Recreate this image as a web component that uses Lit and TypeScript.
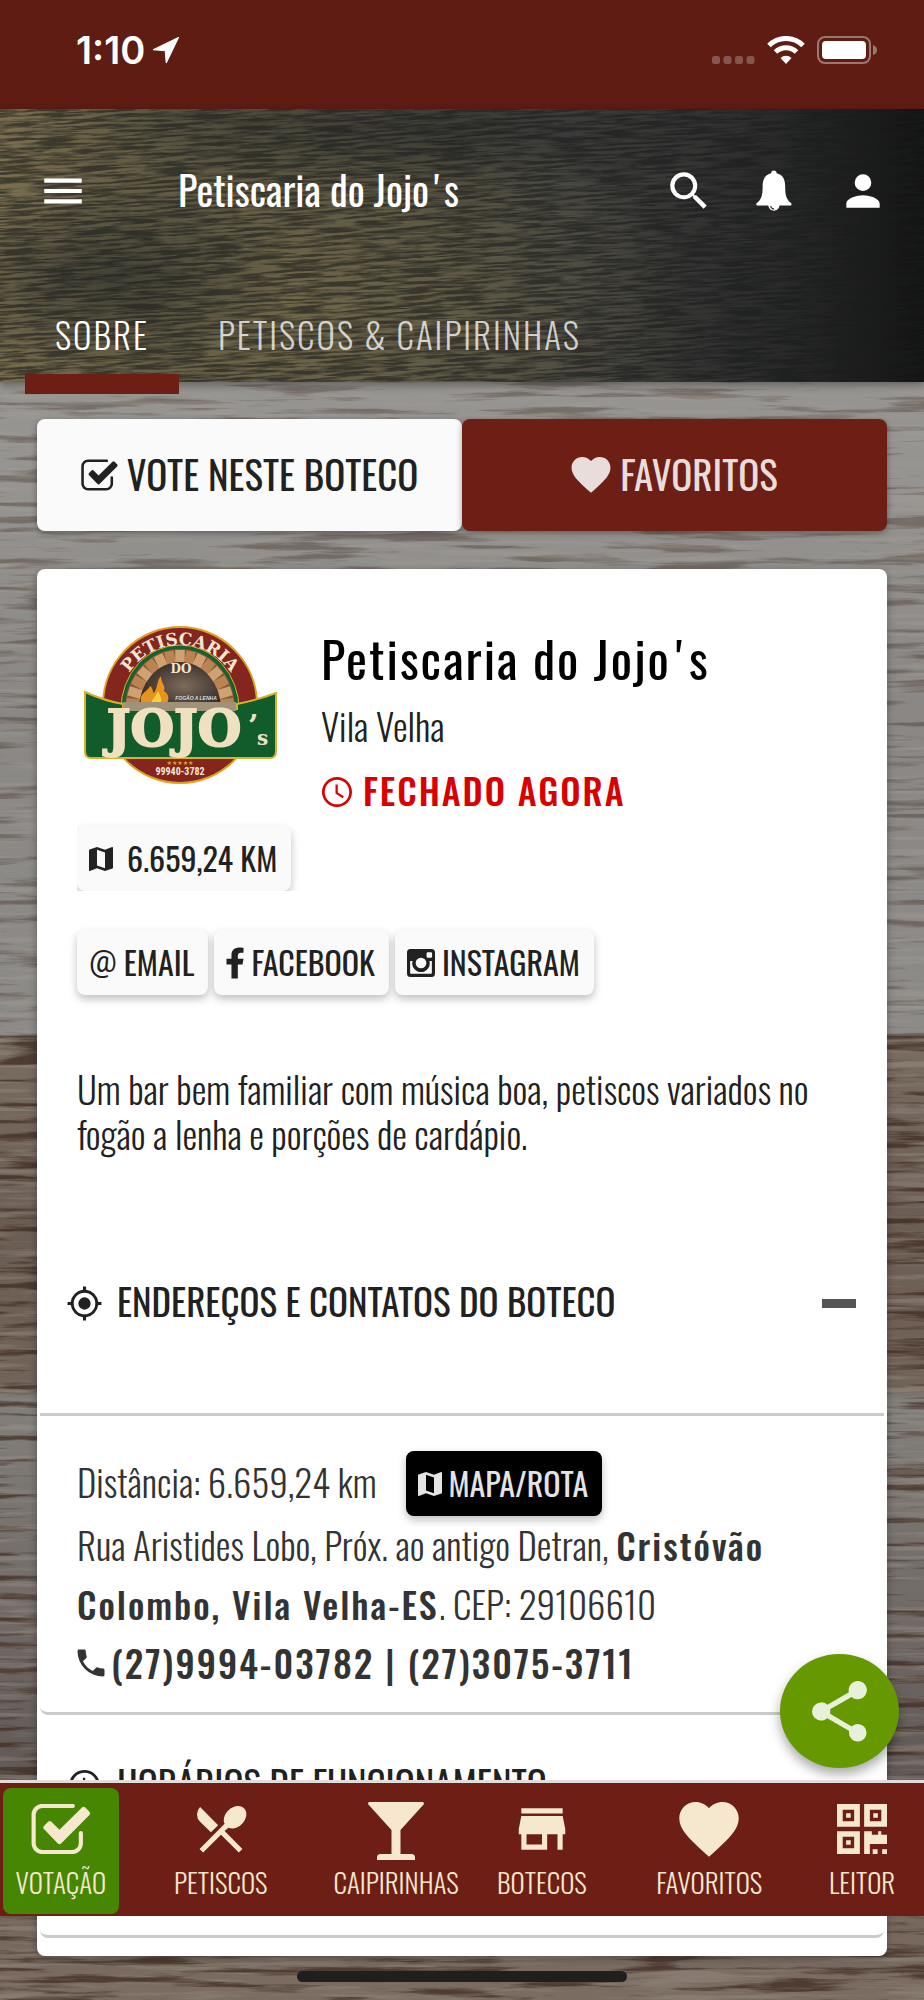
import { LitElement, html, svg, css } from "lit";
import { customElement, state } from "lit/decorators.js";
import { classMap } from "lit/directives/class-map.js";

const icon = (body: unknown, cls = "", box = "0 0 24 24") =>
  html`<svg class="icon ${cls}" viewBox=${box} aria-hidden="true">${body}</svg>`;

const HEART = svg`<path d="M12 21.4l-1.5-1.3C5.4 15.4 2 12.3 2 8.5 2 5.4 4.4 3 7.5 3c1.7 0 3.4.8 4.5 2.1C13.1 3.8 14.8 3 16.5 3 19.6 3 22 5.400 22 8.500c0 3.800-3.400 6.900-8.500 11.600z"/>`;
const CHECK = svg`<path d="M16.500 3.700H5.600A3.200 3.200 0 0 0 2.400 6.900v10.200a3.200 3.200 0 0 0 3.200 3.200h10.600a3.200 3.200 0 0 0 3.200-3.200v-3.600" fill="none" stroke="currentColor" stroke-width="1.500" stroke-linecap="round"/><path d="M6.200 10.800l1.400-1.400a.9.9 0 0 1 1.200 0l2.900 2.900 8.100-8a.9.9 0 0 1 1.200 0l1.500 1.500a.9.9 0 0 1 0 1.200L12.300 17.200a.9.9 0 0 1-1.200 0L6.200 12.100a.9.9 0 0 1 0-1.300z"/>`;
const MAP = svg`<path d="M20.500 3l-.2 0L15 5.100 9 3 3.400 4.900c-.2.1-.4.3-.4.500V20.500c0 .3.200.5.500.5l.2 0L9 18.900l6 2.100 5.600-1.900c.2-.1.4-.3.4-.5V3.500c0-.3-.2-.5-.5-.5zM15 19l-6-2.100V5l6 2.100V19z"/>`;
const CLOCK = svg`<path d="M12 2C6.500 2 2 6.500 2 12s4.500 10 10 10 10-4.500 10-10S17.500 2 12 2zm0 18.200a8.200 8.200 0 1 1 0-16.400 8.200 8.200 0 0 1 0 16.400zM12.500 7H11v6l4.800 3.200.8-1.300-4.100-2.600z"/>`;
const GPS = svg`<path d="M12 8a4 4 0 1 0 0 8 4 4 0 0 0 0-8zm8.900 3A9 9 0 0 0 13 3.100V1h-2v2.100A9 9 0 0 0 3.100 11H1v2h2.100A9 9 0 0 0 11 20.900V23h2v-2.100A9 9 0 0 0 20.900 13H23v-2zM12 19a7 7 0 1 1 0-14 7 7 0 0 1 0 14z"/>`;

const NAV = [
  { label: "VOTAÇÃO", cls: "n1", ic: () => icon(CHECK, "nav-check", "1.500 3 21.500 18") },
  { label: "PETISCOS", cls: "n2", ic: () => icon(svg`<path d="M8.100 13.300l2.800-2.800L3.900 3.500a4 4 0 0 0 0 5.700zm6.800-1.800c1.500.7 3.700.2 5.200-1.400 1.900-1.900 2.300-4.700.8-6.100-1.500-1.500-4.200-1.100-6.100.8-1.600 1.600-2.100 3.700-1.400 5.200L3.700 19.700l1.400 1.400L12 14.200l6.900 6.900 1.400-1.400-6.900-6.900z"/>`) },
  { label: "CAIPIRINHAS", cls: "n3", ic: () => icon(svg`<path d="M1.500 0h53a1.500 1.500 0 0 1 1.100 2.500L32.500 28v24h11a3.500 3.500 0 0 1 3.500 3.500V58H9v-2.500A3.500 3.500 0 0 1 12.500 52h11V28L.4 2.500A1.500 1.500 0 0 1 1.500 0z"/>`, "martini", "0 0 56 58") },
  { label: "BOTECOS", cls: "n4", ic: () => icon(svg`<path d="M20 4H4v2h16zm1 10v-2l-1-5H4l-1 5v2h1v6h10v-6h4v6h2v-6zm-9 4H6v-4h6z"/>`) },
  { label: "FAVORITOS", cls: "n5", ic: () => icon(HEART, "nav-heart", "2 3 20 18.500") },
  { label: "LEITOR", cls: "n6", ic: () => icon(svg`<path fill-rule="evenodd" d="M0 0h8v8H0zM2 2v4h4V2zM3.200 3.200h1.600v1.600H3.200zM9.500 0h8v8h-8zM11.500 2v4h4V2zM12.700 3.200h1.600v1.600h-1.600zM0 9.500h8v8H0zM2 11.500v4h4v-4zM3.200 12.700h1.600v1.600H3.200zM9.500 9.500h2.700v1.300h2.200V9.500h1.100v1.300h2V14h-6v3.500h-2zM12.500 15.800h1.700v1.700h-1.700zM15.800 15.800h1.700v1.700h-1.700z"/>`, "qr", "0 0 17.500 17.500") },
];

@customElement("app-root")
export class AppRoot extends LitElement {
  @state() private tab = 0;

  static styles = css`
    :host {
      display: block;
      font-family: Oswald, "Roboto Condensed", sans-serif;
      font-weight: 400;
      color: #212121;
    }
    * { box-sizing: border-box; }
    button, a {
      font: inherit; color: inherit; text-decoration: none;
      border: 0; padding: 0; margin: 0; background: none; cursor: pointer;
    }
    h1, h2, h3, p { margin: 0; font-weight: inherit; }
    .icon { display: block; fill: currentColor; flex: none; width: 36px; height: 36px; }

    .page {
      min-height: 100vh;
      padding-bottom: 44px;
      background-image:
        url('data:image/svg+xml,<svg xmlns="http://www.w3.org/2000/svg" width="924" height="2000"><filter id="a" x="0" y="0" width="1" height="1" color-interpolation-filters="sRGB"><feTurbulence type="fractalNoise" baseFrequency="0.008 0.12" numOctaves="5" seed="7"/><feColorMatrix values="0 0 0 0 0.24  0 0 0 0 0.16  0 0 0 0 0.12  0 6 0 0 -3.100"/></filter><filter id="b" x="0" y="0" width="1" height="1" color-interpolation-filters="sRGB"><feTurbulence type="fractalNoise" baseFrequency="0.008 0.16" numOctaves="4" seed="3"/><feColorMatrix values="0 0 0 0 0.66  0 0 0 0 0.63  0 0 0 0 0.6  0 5 0 0 -2.500"/></filter><rect width="924" height="1036" filter="url(%23a)" opacity="0.35"/><rect y="1036" width="924" height="964" filter="url(%23a)" opacity="0.7"/><rect width="924" height="2000" filter="url(%23b)" opacity="0.3"/></svg>'),
        linear-gradient(180deg, #969491 0, #969491 480px, #8a8784 700px, #8d8b88 1034px, #7a6e63 1036px, #6a5d53 1220px, #716358 1386px, #827f7b 1400px, #7a7570 1500px, #6e6662 1650px, #605854 1780px, #75675c 1916px, #7b6d62 2000px);
      background-size: 924px 2000px, 100% 100%;
    }

    .status {
      height: 109px; background: #5e1c13; color: #fff;
      display: flex; align-items: center; justify-content: space-between;
      padding: 0 47px 10px 76px;
    }
    .time { display: flex; align-items: center; gap: 8px; font: 600 38px/44px Inter, sans-serif; }
    .time .icon { width: 26px; height: 26px; }
    .signals { display: flex; align-items: center; gap: 12px; }
    .dots { width: 43px; height: 28px; }
    .wifi { width: 38px; height: 28px; }
    .battery { width: 60px; height: 28px; }

    .header {
      color: #fff;
      background-image:
        url('data:image/svg+xml,<svg xmlns="http://www.w3.org/2000/svg" width="924" height="273"><filter id="a" x="0" y="0" width="1" height="1" color-interpolation-filters="sRGB"><feTurbulence type="fractalNoise" baseFrequency="0.025 0.42" numOctaves="4" seed="11"/><feColorMatrix values="0 0 0 0 0.1  0 0 0 0 0.11  0 0 0 0 0.11  0 4 0 0 -1.500"/></filter><rect x="-30" y="-30" width="990" height="340" filter="url(%23a)" opacity="0.6" transform="rotate(-3 460 130)"/></svg>'),
        radial-gradient(180px 90px at 12% 62%, rgba(40, 42, 42, 0.6), transparent),
        radial-gradient(320px 60px at 46% 8%, rgba(40, 42, 42, 0.55), transparent),
        radial-gradient(420px 240px at 30% 75%, #71684a, transparent),
        linear-gradient(90deg, #7d7050 0, #57523f 18%, #4d4a3e 45%, #42423e 62%, #2a2a2a 84%, #131313 100%);
      background-size: 924px 273px, 100% 100%, 100% 100%, 100% 100%, 100% 100%;
      box-shadow: 0 3px 8px rgba(0, 0, 0, 0.35);
    }
    .toolbar { height: 164px; display: flex; align-items: center; padding: 0 36px 0 38px; }
    .toolbar .icon { width: 50px; height: 50px; }
    .title { flex: 1; margin-left: 90px; font-size: 40px; line-height: 60px; padding-bottom: 4px; }
    .actions { display: flex; gap: 37px; }
    .apos { margin: 0 5px; }
    .tabs { display: flex; gap: 9px; height: 109px; padding-left: 25px; }
    .tab {
      position: relative; padding: 12px 30px 0;
      font-size: 35px; line-height: 52px; font-weight: 300; letter-spacing: 2px;
      color: rgba(255, 255, 255, 0.75);
    }
    .tab.on { color: #fff; }
    .tab.on::after {
      content: ""; position: absolute; left: 0; right: 0; bottom: -12px; height: 20px; background: #6e1f15;
    }

    main { padding: 37px 37px 0; }
    .cta { display: grid; grid-template-columns: 1fr 1fr; margin-bottom: 38px; }
    .cta button {
      display: flex; align-items: center; justify-content: center; gap: 9px;
      height: 112px; border-radius: 8px; font-size: 39px; line-height: 60px; padding-bottom: 4px;
      background: #fafafa; box-shadow: 0 2px 6px rgba(0, 0, 0, 0.35);
    }
    .cta .icon { width: 37px; height: 32px; margin-top: 4px; }
    .cta button.fav { background: #6e1f15; color: #e8dddb; }
    .cta .fav .icon { width: 40px; height: 36px; }

    .card { background: #fff; border-radius: 8px; box-shadow: 0 2px 8px rgba(0, 0, 0, 0.3); padding: 56px 0 18px; }
    .intro { padding: 0 40px; }
    .place { display: grid; grid-template-columns: 244px 1fr; }
    .logo { width: 208px; height: 160px; display: block; }
    .name { font-size: 50px; line-height: 64px; color: #000; letter-spacing: 2px; }
    .city { font-size: 37px; line-height: 74px; font-weight: 300; }
    .closed { display: flex; align-items: center; gap: 8px; font-size: 36px; line-height: 54px; font-weight: 500; letter-spacing: 2px; color: #d90000; }
    .closed .icon { width: 36px; height: 36px; margin: 4px 0 0 -2px; }

    .clip { overflow: hidden; height: 74px; width: 232px; padding-top: 9px; }
    .chip {
      display: inline-flex; align-items: center; gap: 7px; height: 65px; padding: 0 14px 2px 12px;
      border-radius: 8px; background: #fafafa; font-size: 32px; line-height: 48px; font-weight: 400;
      box-shadow: 0 4px 8px rgba(0, 0, 0, 0.25);
    }
    .chip .icon { width: 28px; height: 28px; margin-top: 2px; }
    .chip .map { width: 24px; height: 24px; }
    .chip .fb { width: 18px; height: 34px; }
    .chip.km { gap: 14px; }
    .chip.dark { background: #000; color: #e4e4e4; }
    .at { font: 400 31px/40px Roboto, sans-serif; }
    .links { display: flex; flex-wrap: wrap; gap: 6px; margin-top: 39px; }
    .about { margin-top: 71px; font-size: 37px; line-height: 45px; font-weight: 300; }

    .panel { margin: 0 3px; border-bottom: 3px solid #cbcbcb; border-radius: 8px; }
    .panel.first { margin-top: 95px; }
    .panel + .panel { margin-top: 18px; }
    .panel-head {
      display: flex; align-items: center; gap: 14px; width: 100%; text-align: left;
      padding: 22px 28px 84px 26px; font-size: 37px; line-height: 56px;
    }
    .panel-head .icon { width: 37px; height: 37px; margin-top: 4px; }
    .panel-head .label { flex: 1; }
    .minus { width: 34px; height: 9px; background: #555; margin-top: 4px; }
    .panel-body {
      border-top: 3px solid #cbcbcb; padding: 36px 37px 20px;
      font-size: 37px; line-height: 59px; font-weight: 300; color: #333;
    }
    .panel-body strong { font-size: 36px; font-weight: 500; letter-spacing: 2px; }
    .dist { display: flex; align-items: center; gap: 29px; height: 63px; }
    .dist span { padding-bottom: 4px; }
    .phones { display: flex; align-items: center; gap: 2px; font-weight: 500; letter-spacing: 2px; }
    .phones .icon { width: 36px; height: 36px; margin-left: -4px; }
    .panel.last .panel-head { padding-bottom: 124px; }

    .fab {
      position: fixed; right: 25px; bottom: 232px; width: 119px; height: 114px; border-radius: 50%;
      display: grid; place-items: center; background: #669900; color: #e8f0d9;
      box-shadow: 0 6px 12px rgba(0, 0, 0, 0.35);
    }
    .fab .icon { width: 73px; height: 73px; }

    .nav {
      position: fixed; left: 0; right: 0; bottom: 84px; height: 136px;
      display: flex; background: #6e1f15; border-top: 3px solid #e4dcdb; color: #f6e8cf; padding: 5px 4px 2px 3px;
    }
    .nav button {
      display: flex; flex-direction: column; align-items: center; flex: 140 1 0; min-width: 0;
      font-size: 27px; line-height: 42px; font-weight: 300; border-radius: 8px; padding-top: 9px;
    }
    .nav .pic { height: 64px; display: grid; place-items: center; }
    .nav .icon { width: 62px; height: 62px; }
    .nav .nav-check { width: 60px; height: 50px; }
    .nav .martini { width: 56px; height: 58px; margin-top: 4px; }
    .nav .nav-heart { width: 62px; height: 55px; }
    .nav .qr { width: 50px; height: 50px; }
    .nav .n1 { flex-grow: 116; background: #468600; }
    .nav .n2 { flex-grow: 204; }
    .nav .n3 { flex-grow: 147; }
    .nav .n4 { flex-grow: 145; }
    .nav .n5 { flex-grow: 190; }
    .nav .n6 { flex-grow: 116; }

    .home {
      position: fixed; bottom: 18px; left: 50%; margin-left: -165px; width: 330px; height: 11px;
      border-radius: 6px; background: #1f1f1f;
    }
  `;

  private logo() {
    const bricks = Array.from({ length: 15 }, (_, i) => {
      const a = Math.PI * (1 - (i + 0.5) / 15);
      const c = Math.cos(a), s = Math.sin(a);
      return svg`<line x1=${103 + 40 * c} y1=${84 - 46 * s} x2=${103 + 54 * c} y2=${84 - 59 * s} stroke=${i % 2 ? "#cfa173" : "#b98352"} stroke-width="9.500"/>`;
    });
    return html`<svg class="logo" viewBox="0 0 208 160" role="img" aria-label="Petiscaria do Jojo's">
      <defs>
        <path id="arc" d="M42 74 A62 66 0 0 1 164 74"/>
        <radialGradient id="oven" cx="0.55" cy="0.5" r="0.6"><stop offset="0" stop-color="#7d6c5c"/><stop offset="1" stop-color="#2f2521"/></radialGradient>
      </defs>
      <ellipse cx="103" cy="80" rx="77" ry="78" fill="#84261e" stroke="#e0a020" stroke-width="2"/>
      <path d="M44 84A59 64 0 0 1 162 84z" fill="#17602f" stroke="#d8b030" stroke-width="1"/>
      <path d="M48 84A55 60 0 0 1 158 84z" fill="#8a5a35"/>
      ${bricks}
      <path d="M62 84A41 47 0 0 1 144 84z" fill="url(#oven)"/>
      <path d="M65 80c-5-12 6-13 8-19 4 3 2 6 4 7 4-6 3-13 7-17 0 8 5 9 3 15 6 4 5 9 2 14z" fill="#e8941a"/>
      <path d="M75 80c-1-7 4-8 6-14 2 5 5 8 2 14z" fill="#f8cf3c"/>
      <path d="M8 67q20 9 38 12v5h114v-5q20-4 39-11v58q0 7-6 7H14q-6 0-6-7z" fill="#125c2b" stroke="#d8b030" stroke-width="2"/>
      <path d="M46 77h113v9H46z" fill="#a0927a"/>
      <text font-family="DejaVu Serif, serif" font-weight="700" font-size="17" fill="#f3e6d2" text-anchor="middle"><textPath href="#arc" startOffset="50%">PETISCARIA</textPath></text>
      <text x="104" y="48" font-family="DejaVu Serif, serif" font-weight="700" font-size="12" fill="#f3e6d2" text-anchor="middle">DO</text>
      <text x="119" y="75" font-family="Liberation Sans, sans-serif" font-weight="700" font-style="italic" font-size="5" fill="#ddd" text-anchor="middle">FOGÃO A LENHA</text>
      <text x="97" y="121" font-family="DejaVu Serif, serif" font-weight="700" font-size="50" fill="#efe0c0" stroke="#efe0c0" stroke-width="2" text-anchor="middle">JOJO</text>
      <text x="171" y="111" font-family="DejaVu Serif, serif" font-weight="700" font-size="30" fill="#efe0c0">’</text>
      <text x="180" y="120" font-family="DejaVu Serif, serif" font-weight="700" font-size="20" fill="#efe0c0">s</text>
      <text x="103" y="140" font-family="DejaVu Sans, sans-serif" font-size="6" fill="#e8a020" text-anchor="middle">★★★★★</text>
      <text x="103" y="150" font-family="Roboto Condensed, sans-serif" font-weight="700" font-size="10" fill="#f3e6d2" text-anchor="middle">99940-3782</text>
    </svg>`;
  }

  render() {
    return html`
      <div class="page">
        <div class="status">
          <div class="time"><span>1:10</span>${icon(svg`<path d="M23.500.5 0 11.800l11.300.9.9 11.300z" stroke="currentColor" stroke-linejoin="round"/>`)}</div>
          <div class="signals">
            ${icon(svg`<g opacity="0.25"><rect x="0" y="20" width="8" height="8" rx="2.500"/><rect x="11.500" y="20" width="8" height="8" rx="2.500"/><rect x="23" y="20" width="8" height="8" rx="2.500"/><rect x="34.500" y="20" width="8" height="8" rx="2.500"/></g>`, "dots", "0 0 43 28")}
            ${icon(svg`<path d="M2 9.500a24 24 0 0 1 34 0M8.500 16a15 15 0 0 1 21 0" fill="none" stroke="currentColor" stroke-width="5"/><path d="M19 28l-5.500-6a8 8 0 0 1 11 0z"/>`, "wifi", "0 0 38 28")}
            ${icon(svg`<rect x="1" y="1" width="52" height="26" rx="7" fill="none" stroke="currentColor" stroke-width="2" opacity="0.4"/><rect x="5" y="5" width="44" height="18" rx="4"/><path d="M56 9q4 1.500 4 5t-4 5z" opacity="0.4"/>`, "battery", "0 0 60 28")}
          </div>
        </div>

        <header class="header">
          <div class="toolbar">
            <button aria-label="Menu">${icon(svg`<path d="M3 18h18v-2H3zm0-5h18v-2H3zm0-7v2h18V6z"/>`)}</button>
            <h1 class="title">Petiscaria do Jojo<span class="apos">'</span>s</h1>
            <div class="actions">
              <button aria-label="Buscar">${icon(svg`<path d="M15.500 14h-.8l-.3-.3A6.500 6.500 0 1 0 13.700 14.400l.3.3v.8l5 5L20.500 19zm-6 0a4.500 4.500 0 1 1 0-9 4.500 4.500 0 0 1 0 9z"/>`)}</button>
              <button aria-label="Notificações">${icon(svg`<path d="M11 2.200c-.8 0-1.300.5-1.300 1.300C6.600 4.200 5.600 6.600 5.600 9.700c0 4.500-.6 6.300-2.800 8.100-.5.500-.2 1.200.4 1.200h5.100c.2 1.500 1.400 2.500 2.700 2.500s2.500-1 2.700-2.500h5.100c.6 0 .9-.7.4-1.200-2.200-1.800-2.800-3.600-2.800-8.100 0-3.100-1-5.500-4.100-6.200 0-.8-.5-1.300-1.300-1.300z"/><path d="M9.400 19.200q.4 1.400 1.700 1.500" fill="none" stroke="#333" stroke-width=".5"/>`)}</button>
              <button aria-label="Perfil">${icon(svg`<path d="M12 12a4 4 0 1 0 0-8 4 4 0 0 0 0 8zm0 2c-2.700 0-8 1.300-8 4v2h16v-2c0-2.700-5.300-4-8-4z"/>`)}</button>
            </div>
          </div>
          <nav class="tabs">
            ${["SOBRE", "PETISCOS & CAIPIRINHAS"].map((t, i) => html`<button class=${classMap({ tab: true, on: this.tab === i })} @click=${() => (this.tab = i)}>${t}</button>`)}
          </nav>
        </header>

        <main>
          <div class="cta">
            <button>${icon(CHECK, "", "1.500 3 21.500 18")}VOTE NESTE BOTECO</button>
            <button class="fav">${icon(HEART, "", "2 3 20 18.500")}FAVORITOS</button>
          </div>

          <section class="card">
            <div class="intro">
              <div class="place">
                ${this.logo()}
                <div>
                  <h2 class="name">Petiscaria do Jojo<span class="apos">'</span>s</h2>
                  <p class="city">Vila Velha</p>
                  <p class="closed">${icon(CLOCK)}FECHADO AGORA</p>
                </div>
              </div>
              <div class="clip"><button class="chip km">${icon(MAP, "map", "3 3 18 18")}6.659,24 KM</button></div>
              <div class="links">
                <a class="chip" href="#email"><span class="at">@</span>EMAIL</a>
                <a class="chip" href="#facebook">${icon(svg`<path d="M9 23v-10H5.500V9H9V6.500C9 3 11 1 14.500 1c1.500 0 3 .2 3 .2v3.500h-1.700c-1.800 0-2.300 1.100-2.300 2.200V9h4l-.7 4h-3.300v10z"/>`, "fb", "5.500 0 12 24")}FACEBOOK</a>
                <a class="chip" href="#instagram">${icon(svg`<path fill-rule="evenodd" d="M3 0h18a3 3 0 0 1 3 3v18a3 3 0 0 1-3 3H3a3 3 0 0 1-3-3V3a3 3 0 0 1 3-3zM17.800 2.800a1 1 0 0 0-1 1v2.700a1 1 0 0 0 1 1h2.700a1 1 0 0 0 1-1V3.800a1 1 0 0 0-1-1zM21.300 10.200h-2.100a7.500 7.500 0 1 1-14.400 0H2.700v10.100a1 1 0 0 0 1 1h16.600a1 1 0 0 0 1-1zM12 7.400a4.600 4.600 0 1 0 0 9.200 4.600 4.600 0 0 0 0-9.200z"/>`)}INSTAGRAM</a>
              </div>
              <p class="about">Um bar bem familiar com música boa, petiscos variados no fogão a lenha e porções de cardápio.</p>
            </div>

            <div class="panel first">
              <button class="panel-head">${icon(GPS)}<span class="label">ENDEREÇOS E CONTATOS DO BOTECO</span><span class="minus"></span></button>
              <div class="panel-body">
                <div class="dist"><span>Distância: 6.659,24 km</span><button class="chip dark">${icon(MAP, "map", "3 3 18 18")}MAPA/ROTA</button></div>
                <p>Rua Aristides Lobo, Próx. ao antigo Detran, <strong>Cristóvão Colombo, Vila Velha-ES</strong>. CEP: 29106610</p>
                <p class="phones">${icon(svg`<path d="M6.600 10.800a15.200 15.200 0 0 0 6.600 6.600l2.200-2.200c.3-.3.700-.4 1-.2 1.100.4 2.300.6 3.600.6.500 0 1 .4 1 1V20c0 .5-.5 1-1 1A17 17 0 0 1 3 4c0-.6.400-1 1-1h3.500c.6 0 1 .4 1 1 0 1.300.2 2.500.6 3.600.1.300 0 .7-.2 1z"/>`)}<span>(27)9994-03782 | (27)3075-3711</span></p>
              </div>
            </div>

            <div class="panel last">
              <button class="panel-head">${icon(CLOCK)}<span class="label">HORÁRIOS DE FUNCIONAMENTO</span></button>
            </div>
          </section>
        </main>

        <button class="fab" aria-label="Compartilhar">${icon(svg`<path d="M18 16.100c-.8 0-1.400.3-2 .8l-7.100-4.200a3.300 3.300 0 0 0 0-1.400L16 7.200A3 3 0 1 0 15 5c0 .2 0 .5.100.7L8 9.800a3 3 0 1 0 0 4.400l7.200 4.200-.1.600A2.900 2.900 0 1 0 18 16.100z"/>`)}</button>

        <nav class="nav">
          ${NAV.map((n) => html`<button class=${n.cls}><span class="pic">${n.ic()}</span><span>${n.label}</span></button>`)}
        </nav>
        <div class="home"></div>
      </div>
    `;
  }
}
